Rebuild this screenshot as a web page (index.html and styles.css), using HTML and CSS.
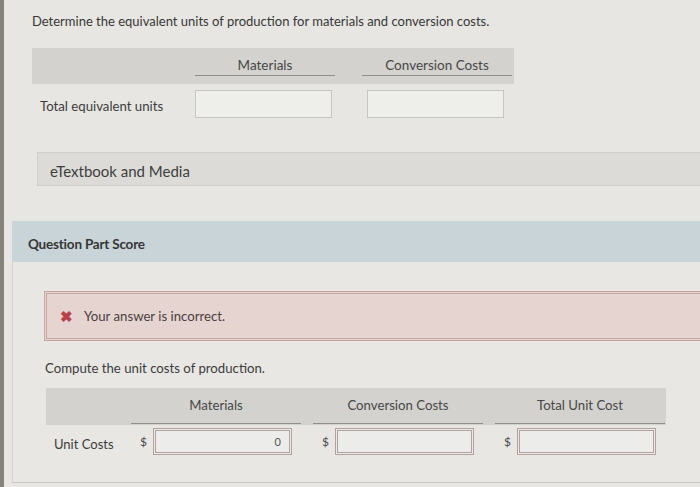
FILE: index.html
```html
<!DOCTYPE html>
<html>
<head>
<meta charset="utf-8">
<link rel="stylesheet" href="styles.css">
</head>
<body>
<div class="page">
  <section class="part1">
    <p class="prompt">Determine the equivalent units of production for materials and conversion costs.</p>
    <div class="t1-head">
      <div></div>
      <div class="hcell">Materials</div>
      <div class="hcell">Conversion Costs</div>
    </div>
    <div class="t1-row">
      <div class="rlabel">Total equivalent units</div>
      <div class="box"></div>
      <div class="box"></div>
    </div>
  </section>

  <div class="etext">eTextbook and Media</div>

  <div class="score">Question Part Score</div>

  <section class="part2">
    <div class="alert"><span class="xmark">&#10006;</span><span>Your answer is incorrect.</span></div>
    <p class="prompt2">Compute the unit costs of production.</p>
    <div class="t2-head">
      <div></div>
      <div class="hcell2">Materials</div>
      <div class="hcell2">Conversion Costs</div>
      <div class="hcell2">Total Unit Cost</div>
    </div>
    <div class="t2-row">
      <div class="rlabel2">Unit Costs</div>
      <div class="cell"><span class="cur">$</span><div class="box2">0</div></div>
      <div class="cell"><span class="cur">$</span><div class="box2"></div></div>
      <div class="cell"><span class="cur">$</span><div class="box2"></div></div>
    </div>
  </section>
</div>
</body>
</html>
```

FILE: styles.css
```css
html, body {
  margin: 0;
  padding: 0;
}
body {
  width: 700px;
  height: 487px;
  overflow: hidden;
  background: #dcdbd6;
  font-family: Lato, "Open Sans", sans-serif;
  color: #3c3c3c;
}
.page {
  border-left: 4px solid #85837c;
  height: 487px;
  box-sizing: border-box;
  background: #e7e6e2;
}
.part1 {
  padding: 12px 0 0 28px;
}
.prompt {
  margin: 0;
  font-size: 13px;
  line-height: 18px;
  color: #383838;
}
.t1-head {
  margin-top: 18px;
  width: 482px;
  background: #d3d2ce;
  display: grid;
  grid-template-columns: 136px 140px 150px;
  column-gap: 27px;
  height: 36px;
  box-sizing: border-box;
}
.hcell {
  padding-top: 9px;
  line-height: 17px;
  height: 28px;
  box-sizing: border-box;
  border-bottom: 1px solid #8f8f8c;
  text-align: center;
  font-size: 13.5px;
  color: #474747;
}
.t1-row {
  display: grid;
  grid-template-columns: 128px 137px 137px;
  column-gap: 35px;
  align-items: center;
  margin-top: 6px;
}
.rlabel {
  padding-left: 8px;
  font-size: 13.2px;
  color: #3c3c3c;
  padding-top: 4px;
  white-space: nowrap;
}
.box {
  height: 26px;
  background: #eeeeeb;
  border: 1px solid #c6c6c2;
}
.etext {
  margin: 34px 0 0 33px;
  height: 34px;
  box-sizing: border-box;
  background: #dcdbd7;
  border: 1px solid #d0cfca;
  border-right: none;
  padding: 4px 0 0 12px;
  display: flex;
  align-items: center;
  font-size: 15px;
  color: #3e3e3e;
}
.score {
  margin: 35px 0 0 8px;
  height: 41px;
  box-sizing: border-box;
  background: #c9d4d8;
  display: flex;
  align-items: center;
  padding: 5px 0 0 16px;
  font-size: 13.5px;
  font-weight: 700;
  letter-spacing: -0.2px;
  color: #363636;
}
.part2 {
  margin-left: 8px;
  border-left: 1px solid #d3d3cc;
  border-bottom: 1px solid #c8c7c1;
  background: #e8e7e3;
  padding: 29px 0 0 31px;
  height: 221px;
  box-sizing: border-box;
}
.alert {
  height: 50px;
  box-sizing: border-box;
  background: #e6d4d1;
  border: 3px double #c4a6a3;
  border-right: none;
  display: flex;
  align-items: center;
  padding-left: 13px;
  font-size: 13.2px;
  color: #4a4040;
}
.xmark {
  color: #b8414a;
  font-size: 15px;
  font-weight: 700;
  margin-right: 11px;
}
.prompt2 {
  margin: 19px 0 0 1px;
  font-size: 13.2px;
  line-height: 16px;
  color: #3c3c3c;
}
.t2-head {
  margin: 12px 0 0 2px;
  width: 620px;
  height: 37px;
  box-sizing: border-box;
  background: #d3d2ce;
  display: grid;
  grid-template-columns: 73px 170px 170px 170px;
  column-gap: 12px;
}
.hcell2 {
  padding-top: 9px;
  line-height: 16px;
  height: 36px;
  box-sizing: border-box;
  border-bottom: 1px solid #8f8f8c;
  text-align: center;
  font-size: 13.2px;
  color: #474747;
}
.t2-row {
  margin: 3px 0 0 2px;
  display: grid;
  grid-template-columns: 73px 170px 170px 170px;
  column-gap: 12px;
  align-items: center;
}
.rlabel2 {
  padding-left: 8px;
  font-size: 13px;
  color: #3c3c3c;
  padding-top: 5px;
  white-space: nowrap;
}
.cell {
  display: flex;
  align-items: center;
  padding-left: 9px;
  gap: 6px;
}
.cur {
  font-size: 12px;
  color: #4a4a4a;
}
.box2 {
  width: 139px;
  height: 27px;
  box-sizing: border-box;
  background: #ececea;
  border: 3px double #b3a09c;
  font-size: 11px;
  color: #555;
  text-align: right;
  padding-right: 8px;
  line-height: 21px;
}
```
